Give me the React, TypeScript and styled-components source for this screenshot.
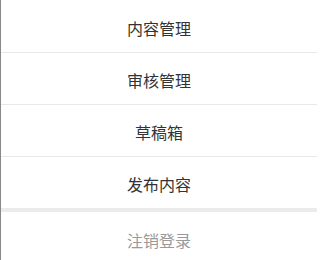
import React from 'react'
import styled, { createGlobalStyle } from 'styled-components'

const GlobalStyle = createGlobalStyle`
  html, body {
    margin: 0;
    padding: 0;
    background: #fff;
  }
  body {
    font-family: "Noto Sans CJK SC", "Noto Sans", sans-serif;
  }
`

const Menu = styled.div`
  width: 317px;
  height: 260px;
  overflow: hidden;
  border-left: 1px solid #888;
  box-sizing: border-box;
  background: #fff;
`

const MenuItem = styled.div<{ muted?: boolean }>`
  height: 52px;
  box-sizing: border-box;
  padding-top: 3px;
  display: flex;
  align-items: center;
  justify-content: center;
  font-size: 16px;
  color: ${({ muted }) => (muted ? '#9a9a9a' : '#333')};
  cursor: pointer;

  & + & {
    border-top: 1px solid #e8e8e8;
  }
`

const Gap = styled.div`
  height: 4px;
  background: #ebebeb;
`

const items = ['内容管理', '审核管理', '草稿箱', '发布内容']

const App: React.FC = () => {
  return (
    <>
      <GlobalStyle />
      <Menu>
        {items.map(label => (
          <MenuItem key={label}>{label}</MenuItem>
        ))}
        <Gap />
        <MenuItem muted>注销登录</MenuItem>
      </Menu>
    </>
  )
}

export default App
